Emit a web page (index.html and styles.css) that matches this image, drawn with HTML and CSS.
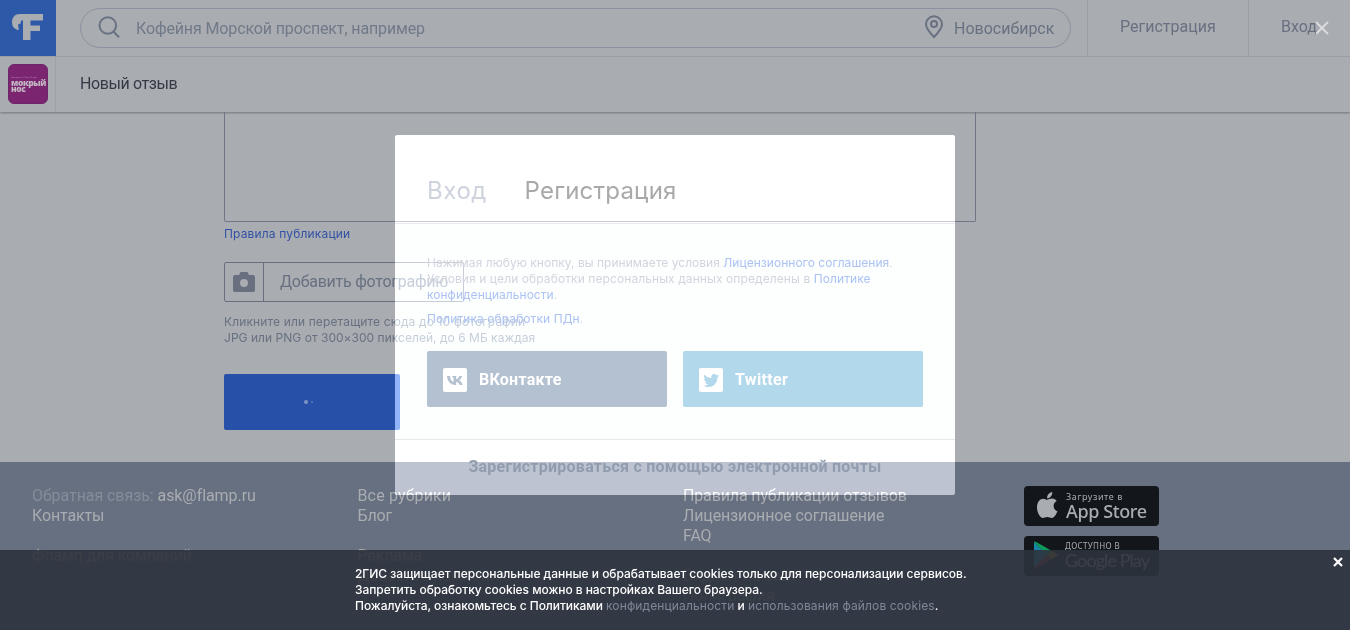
FILE: index.html
```html
<!DOCTYPE html>
<html lang="ru">
<head>
<meta charset="utf-8">
<title>Новый отзыв</title>
<link rel="stylesheet" href="styles.css">
</head>
<body>
<header class="header">
  <div class="topbar">
    <div class="logo"><svg width="56" height="56" viewBox="0 0 56 56"><path fill="#a9acb0" d="M20 14H43V20.500H30.500V25.500H40V31H30.500V40H23V20.500H21C21.200 23 20 24.800 18.300 24C17.700 25.500 18.800 27 18.800 30C14 29.500 12 26 12 22.500C12 17 15 14 20 14Z"/></svg></div>
    <div class="search">
      <svg class="search-icon" width="24" height="24" viewBox="0 0 24 24" fill="none" stroke="#697282" stroke-width="2"><circle cx="9.800" cy="9.500" r="8.300"/><path d="M15.500 15.500L21 21.300"/></svg>
      <span class="query">Кофейня Морской проспект, например</span>
      <svg class="pin" width="20" height="24" viewBox="0 0 20 24" fill="none" stroke="#687181" stroke-width="2"><path d="M10 22C6 18 2 13.800 2 9.300A8 8 0 0 1 18 9.300C18 13.800 14 18 10 22Z"/><circle cx="10" cy="9" r="3"/></svg>
      <span class="city">Новосибирск</span>
    </div>
    <div class="signup">Регистрация</div>
    <div class="signin">Вход</div>
  </div>
  <div class="subbar">
    <div class="brand"><div class="brand-tile"><small>МАГАЗИНЫ ФАСТФУДА</small><b>мокрый<br>нос</b></div></div>
    <h1 class="title">Новый отзыв</h1>
  </div>
</header>
<main class="main">
  <div class="textarea"></div>
  <a class="rules">Правила публикации</a>
  <div class="upload">
    <div class="camera"><svg width="22" height="20" viewBox="0 0 22 20"><path fill="#687080" fill-rule="evenodd" d="M6 3L7.500 0H14.500L16 3H20Q22 3 22 5V18Q22 20 20 20H2Q0 20 0 18V5Q0 3 2 3ZM11 7A4 4 0 1 0 11 15A4 4 0 1 0 11 7Z"/></svg></div>
    <span class="upload-label">Добавить фотографию</span>
  </div>
  <p class="hint"><span class="hint-a">Кликните или перетащите сюда до 10 фотографий</span><br><span class="hint-b">JPG или PNG от 300×300 пикселей, до 6 МБ каждая</span></p>
  <div class="submit"><i class="dot"></i><i class="dot small"></i></div>
</main>
<footer class="footer">
  <div class="col">
    <p class="feedback"><span class="muted">Обратная связь:</span> ask@flamp.ru</p><p>Контакты</p><p class="gap hid">Фламп для компаний</p>
  </div>
  <div class="col"><p class="rubrics">Все рубрики</p><p>Блог</p><p class="gap hid">Реклама</p><p class="hid">Добавить компанию</p></div>
  <div class="col third"><p>Правила публикации отзывов</p><p>Лицензионное соглашение</p><p>FAQ</p><p class="gap hid">Виджет на сайт</p><p class="hid">Полиграфия</p></div>
  <div class="stores">
    <div class="store">
      <svg width="22" height="28" viewBox="0 0 22 28" fill="#a9acb0"><path d="M11 8.800C12.500 8.800 13.500 7.600 16 7.600C18.300 7.600 19.800 8.800 20.700 10C16.200 12.500 16.800 18.500 21.500 20.300C20 24 18 27 15.800 27C14 27 13.300 26 11.300 26C9.200 26 8.500 27 6.800 27C4 27 1 21.500 1 16.500C1 11 4 7.700 7.200 7.700C9 7.700 10 8.800 11 8.800Z"/><path d="M11 7.300C11 4 13.300 1.500 16.300 1C16.500 4.300 14.200 7.200 11 7.300Z"/></svg>
      <div class="store-text"><span class="apple-sub">Загрузите в</span><span class="apple-name">App Store</span></div>
    </div>
    <div class="store google">
      <svg width="24" height="28" viewBox="0 0 24 28"><path fill="#1686a3" d="M0 1L13 14L0 27Z"/><path fill="#0e9c5b" d="M0 1Q1 0 3 1.500L18 10L13 14Z"/><path fill="#aa891b" d="M18 10L23 13Q24 14 23 15L18 18L13 14Z"/><path fill="#9d2c36" d="M0 27L13 14L18 18L3 26.500Q1 28 0 27Z"/></svg>
      <div class="store-text"><span class="google-sub">ДОСТУПНО В</span><span class="google-name">Google Play</span></div>
    </div>
  </div>
</footer>

<div class="modal-glow"></div>
<section class="modal">
  <div class="tabs"><span class="tab">Вход</span><span class="tab current">Регистрация</span></div>
  <div class="modal-body">
    <p class="terms"><span class="t1">Нажимая любую кнопку, вы принимаете условия <a>Лицензионного соглашения</a>.</span><br><span class="t2">Условия и цели обработки персональных данных определены в <a>Политике</a></span><br><span class="t1"><a>конфиденциальности</a>.</span></p>
    <p class="terms policy"><a>Политика обработки ПДн</a>.</p>
    <div class="socials">
      <div class="social vk"><svg width="24" height="24" viewBox="0 0 24 24"><rect width="24" height="24" rx="2" fill="#fff"/><path fill="#b4c1d0" d="M12.600 17C7.300 17 4.500 13.500 4 8H7C7.200 11.500 8.600 13.400 10.500 14V10L9 8H13.200V11.200C14.600 11 15.800 9.700 16.400 8H19.200C18.700 9.900 17.500 11.300 16 12.200C17.600 12.900 19 14.400 19.800 17H16.800C16.200 15.300 15 14.100 13.200 13.900V17Z"/></svg><span>ВКонтакте</span></div>
      <div class="social tw"><svg width="24" height="24" viewBox="0 0 24 24"><rect width="24" height="24" rx="2" fill="#fff"/><path fill="#b2d8eb" d="M20 7.600Q19.200 8 18.300 8.100Q19.300 7.400 19.600 6.400Q18.600 7 17.500 7.200C15.300 4.800 11.700 6.700 12.300 10C9.500 9.900 7.200 8.600 5.500 6.500C4.500 8.200 5 10 6.500 11Q5.700 11 5 10.600C5 12.300 6.200 13.600 7.700 13.900Q7 14.100 6.200 13.900C6.700 15.200 7.800 16.200 9.300 16.200Q7.300 17.700 4.500 17.500C11.500 21.600 18.500 17 18.400 9.300Q19.500 8.500 20 7.600Z"/></svg><span class="tw-label">Twitter</span></div>
    </div>
  </div>
  <div class="email">Зарегистрироваться с помощью электронной почты</div>
</section>
<svg class="modal-close" width="14" height="14" viewBox="0 0 14 14" stroke="#dcdddf" stroke-width="1.800"><path d="M1 1L13 13M13 1L1 13"/></svg>

<aside class="cookies">
  <p class="cookie-text"><span class="c1">2ГИС защищает персональные данные и обрабатывает cookies только для персонализации сервисов.</span><br>Запретить обработку cookies можно в настройках Вашего браузера.<br><span class="c3">Пожалуйста, ознакомьтесь с Политиками <a>конфиденциальности</a> и <a>использования файлов cookies</a>.</span></p>
  <svg class="cookie-close" width="10" height="10" viewBox="0 0 10 10" stroke="#fff" stroke-width="2.200"><path d="M1 1L9 9M9 1L1 9"/></svg>
</aside>
</body>
</html>
```
FILE: styles.css
```css
* { box-sizing: border-box; }
html { background: #a9acb0; }
body { margin: 0; width: 1350px; height: 630px; overflow: hidden; background: #a9acb0; font: 16px/20px Roboto, "Liberation Sans", sans-serif; color: #687181; display: flex; flex-direction: column; }
p, h1 { margin: 0; font-size: inherit; font-weight: 400; }

.header { height: 112px; flex: none; box-shadow: 0 1px 2px rgba(50, 55, 65, .45); }
.topbar { display: flex; height: 57px; border-bottom: 1px solid #9b9ea6; }
.logo { width: 56px; height: 56px; background: #2d59a8; }
.search { display: flex; align-items: center; width: 991px; height: 40px; margin: 8px 16px 0 24px; border: 1px solid #8c90a0; border-radius: 20px; padding-left: 17px; }
.query { margin-left: 14px; letter-spacing: -.13px; color: #717a89; width: 788px; padding-top: 1px; }
.city { padding-top: 1px; }
.pin { margin: -2px 10px 0 0; }
.search-icon { flex: none; }
.signup { width: 162px; border: solid #9b9ea6; border-width: 0 1px; padding: 17px 0 0 32px; }
.signin { padding: 17px 0 0 32px; }
.subbar { display: flex; height: 55px; }
.brand { width: 56px; border-right: 1px solid #9ca0a7; padding: 7px 8px; }
.brand-tile { width: 40px; height: 40px; border-radius: 6px; background: #7b2470; border: 1px solid #6d2668; padding: 11px 0 0 2px; color: #c3b6c3; display: flex; flex-direction: column; overflow: hidden; }
.brand-tile small { font-size: 2.3px; line-height: 4px; opacity: .6; }
.brand-tile b { font: 900 8.500px/6px "Open Sans", sans-serif; letter-spacing: -.4px; }
.title { padding: 17px 0 0 24px; color: #343946; letter-spacing: -.4px; }

.main { height: 350px; flex: none; padding-left: 224px; display: flex; flex-direction: column; align-items: flex-start; }
.textarea { width: 752px; height: 110px; border: solid #717687; border-width: 0 1px 1px; border-radius: 0 0 2px 2px; }
.rules { font: 12px/16px Inter, sans-serif; letter-spacing: .16px; color: #3252a5; margin-top: 4px; }
.upload { display: flex; width: 240px; height: 40px; margin-top: 20px; border: 1px solid #687080; border-radius: 2px; }
.camera { width: 39px; border-right: 1px solid #687080; padding: 9px 0 0 8px; }
.upload-label { padding: 9px 0 0 16px; letter-spacing: -.25px; white-space: nowrap; }
.hint { font: 12px/16px Inter, sans-serif; margin-top: 12px; white-space: nowrap; }
.hint-a { letter-spacing: .13px; }
.hint-b { letter-spacing: .03px; }
.submit { width: 176px; height: 56px; margin-top: 28px; border-radius: 2px; background: #2750a8; display: flex; align-items: center; gap: 3px; padding-left: 80px; }
.dot { width: 4px; height: 4px; border-radius: 2px; background: #7f94c4; }
.dot.small { width: 2px; height: 2px; background: #5f79b6; }

.footer { height: 168px; flex: none; background: #677080; display: flex; padding: 24px 0 0 32px; color: #a9acb0; }
.col { width: 325.500px; flex: none; letter-spacing: -.14px; }
.feedback { letter-spacing: -.07px; }
.rubrics { letter-spacing: .15px; }
.col.third { width: 341px; }
.muted { color: #858d9a; }
.gap { margin-top: 20px; }
.hid { color: #a9a69b; }
.stores { display: flex; flex-direction: column; gap: 10px; }
.store { width: 135px; height: 40px; border-radius: 4px; background: #13161a; display: flex; padding: 5px 0 0 12px; gap: 8px; }
.store.google { padding-left: 10px; gap: 7px; }
.store-text { display: flex; flex-direction: column; white-space: nowrap; }
.apple-sub { font: 9px/11px "Noto Sans", sans-serif; letter-spacing: .6px; }
.apple-name { font: 500 18px/18px "Noto Sans", sans-serif; letter-spacing: -.4px; }
.google-sub { font: 8px/10px "Noto Sans", sans-serif; letter-spacing: .34px; }
.google-name { font: 18px/19px Lato, sans-serif; letter-spacing: -.92px; }

.modal-glow, .modal { position: absolute; left: 395px; top: 135px; width: 560px; height: 360px; border-radius: 2px; }
.modal-glow { background: #565351; mix-blend-mode: plus-lighter; }
.tabs { height: 89px; border-bottom: 1px solid #e9eaef; padding: 40px 32px 0; display: flex; gap: 37.500px; font: 24px/32px Inter, sans-serif; }
.tab { color: #cfd3dd; letter-spacing: .57px; }
.tab.current { color: #a9a9aa; letter-spacing: .21px; }
.modal-body { height: 216px; padding: 31px 32px 0; background: rgba(240, 253, 248, .18); border-bottom: 1px solid #e6e8ed; }
.terms { font: 12px/16px Inter, sans-serif; color: #d3d5de; white-space: nowrap; }
.terms a { color: #acc2f5; }
.t1 { letter-spacing: .03px; }
.t2 { letter-spacing: .09px; }
.policy { margin-top: 8px; letter-spacing: .08px; }
.socials { display: flex; gap: 16px; margin-top: 24px; }
.social { width: 240px; height: 56px; border-radius: 2px; display: flex; padding: 17px 16px 0; gap: 12px; color: #fff; font-weight: 700; line-height: 23px; letter-spacing: .25px; }
.vk { background: #b4c1d0; }
.tw { background: #b2d8eb; }
.tw-label { letter-spacing: .35px; }
.email { text-align: center; font-weight: 700; color: #919caf; letter-spacing: .25px; line-height: 20px; padding-top: 17px; }
.modal-close { position: absolute; left: 1315px; top: 21px; }

.cookies { position: absolute; left: 0; top: 550px; width: 1350px; height: 80px; background: rgba(46, 51, 61, .9); padding: 16px 0 0 355px; }
.cookie-text { font: 500 12px/16px Inter, sans-serif; letter-spacing: -.06px; color: #fff; white-space: nowrap; }
.cookie-text a { color: #7f8899; font-weight: 400; letter-spacing: .13px; }
.c1 { letter-spacing: -.02px; }
.cookie-close { position: absolute; left: 1333px; top: 7px; }
```
